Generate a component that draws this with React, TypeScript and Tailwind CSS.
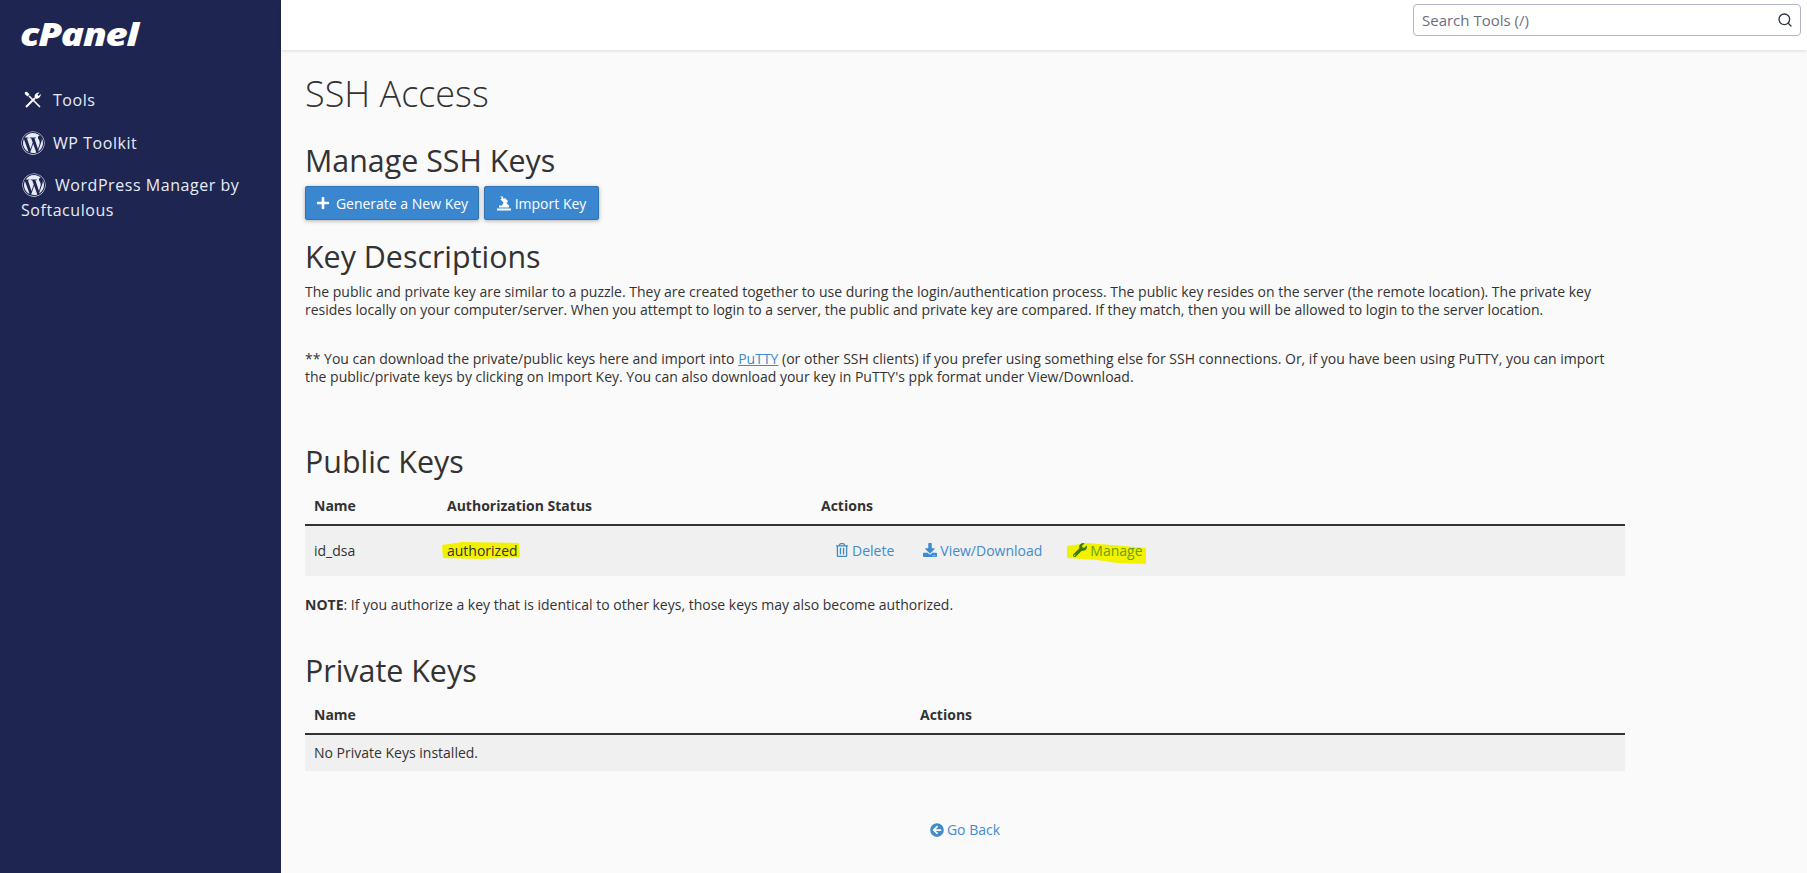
import { FaPlus, FaDownload, FaWrench, FaArrowCircleLeft, FaWordpress, FaRegTrashAlt } from "react-icons/fa";
import { Search } from "lucide-react";

const font = "font-['Open_Sans',sans-serif]";

function ToolsIcon() {
  return (
    <svg width="18" height="18" viewBox="0 0 18 18" fill="none" stroke="#fff" strokeWidth="1.6" className="shrink-0">
      <path d="M5 5 L16 16" />
      <path d="M1 1 L3 0.8 L5.5 3.5 L3.5 5.5 L0.8 3 Z" fill="#fff" stroke="none" />
      <path d="M2 16 L11 7" strokeWidth="2" />
      <path d="M10.5 5.5 C10.5 3 13 1 15.5 1.5 L13.5 3.8 L14.5 5 L16.8 3 C17 6 14 8.5 11.5 7.5 Z" fill="#fff" stroke="none" />
    </svg>
  );
}

function ImportIcon() {
  return (
    <svg width="14" height="15" viewBox="0 0 14 15" fill="#fff" className="shrink-0">
      <rect x="0" y="12.5" width="14" height="2" />
      <path d="M2 11.5 L2 9.5 L5 9.5 L6.5 6.5 L3.5 3.5 L5 2 L3 0.5 L6 0.5 L6.5 3 L8 2 L11 5 L9.5 7 L12 9.5 L12 11.5 Z" />
    </svg>
  );
}

export default function App() {
  return (
    <div className={`${font} flex min-h-[873px] h-[873px] overflow-hidden bg-[#fafafa] text-[14px] text-[#333]`}>
      <aside className="w-[281px] shrink-0 bg-[#1f2551] text-[#e6ecf5]">
        <div className="pl-[20px] pt-[15px] h-[63px]">
          <span className="inline-block origin-left scale-x-[1.24] text-[31px] leading-[38px] font-extrabold italic tracking-[-1px] text-white">cPanel</span>
        </div>
        <nav className="pt-[25px] text-[16px] leading-[25px] tracking-[0.55px]">
          <div className="flex items-center pl-[24px] h-[24px] gap-[11px]">
            <ToolsIcon />
            <span>Tools</span>
          </div>
          <div className="flex items-center pl-[21px] h-[24px] mt-[19px] gap-[8px]">
            <FaWordpress className="text-[24px]" />
            <span>WP Toolkit</span>
          </div>
          <div className="pl-[21px] mt-[18px]">
            <FaWordpress className="inline text-[24px] align-[-6px] mx-[1px]" />
            <span className="ml-[8px]">WordPress Manager by</span>
            <br />
            <span>Softaculous</span>
          </div>
        </nav>
      </aside>
      <div className="flex-1 min-w-0">
        <header className="h-[50px] bg-white shadow-[0_1px_3px_rgba(0,0,0,0.12)] flex items-center justify-end pr-[6px]">
          <div className="w-[388px] h-[32px] mb-[10px] border border-[#b4b6c8] rounded-[4px] flex items-center justify-between pl-[8px] pr-[7px] text-[#6b6f7b] bg-white">
            <span className="text-[15px]">Search Tools (/)</span>
            <Search size={16} strokeWidth={2} className="text-[#2a3540]" />
          </div>
        </header>
        <main className="pl-[24px] w-[1344px] pt-[24px]">
          <h1 className="text-[36px] leading-[40px] font-light text-[#333]">SSH Access</h1>
          <h2 className="text-[30.4px] leading-[33px] mt-[30px] text-[#333]">Manage SSH Keys</h2>
          <div className="flex gap-[5px] mt-[9px]">
            <button className="h-[34px] w-[174px] flex items-center justify-center gap-[6px] bg-[#3a87cf] border border-[#2f74b5] rounded-[2px] text-white shadow-[0_1px_4px_rgba(0,0,0,0.3)]">
              <FaPlus className="text-[14px]" /> Generate a New Key
            </button>
            <button className="h-[34px] w-[115px] flex items-center justify-center gap-[4px] bg-[#3a87cf] border border-[#2f74b5] rounded-[2px] text-white shadow-[0_1px_4px_rgba(0,0,0,0.3)]">
              <ImportIcon /> Import Key
            </button>
          </div>
          <h2 className="text-[30.4px] leading-[33px] mt-[20px]">Key Descriptions</h2>
          <p className="mt-[10px] leading-[18px]">
            The public and private key are similar to a puzzle. They are created together to use during the login/authentication process. The public key resides on the server (the remote location). The private key resides locally on your computer/server. When you attempt to login to a server, the public and private key are compared. If they match, then you will be allowed to login to the server location.
          </p>
          <p className="mt-[31px] leading-[18px]">
            ** You can download the private/public keys here and import into <a className="text-[#428bca] underline">PuTTY</a> (or other SSH clients) if you prefer using something else for SSH connections. Or, if you have been using PuTTY, you can import the public/private keys by clicking on Import Key. You can also download your key in PuTTY's ppk format under View/Download.
          </p>
          <h2 className="text-[30.4px] leading-[33px] mt-[59px]">Public Keys</h2>
          <div className="mt-[9px] grid grid-cols-[133px_374px_1fr] font-bold h-[39px] items-center border-b-2 border-[#333] pl-[9px]">
            <span>Name</span>
            <span>Authorization Status</span>
            <span>Actions</span>
          </div>
          <div className="grid grid-cols-[133px_374px_1fr] h-[50px] items-center bg-[#f0f0f0] pl-[9px] pb-[2px]">
            <span>id_dsa</span>
            <span className="relative block">
              <svg className="absolute -left-[5px] top-[2px]" width="78" height="17" viewBox="0 0 78 17">
                <path d="M0 3 L20 0 L77 1 L78 15 L40 17 L1 16 Z" fill="#f2f200" />
              </svg>
              <span className="relative">authorized</span>
            </span>
            <span className="flex items-center text-[#428bca]">
              <span className="flex items-center gap-[3px] ml-[14px]"><FaRegTrashAlt className="text-[14px]" /> Delete</span>
              <span className="flex items-center gap-[3px] ml-[29px]"><FaDownload className="text-[14px]" /> View/Download</span>
              <span className="relative flex items-center gap-[3px] ml-[31px] text-[#6a9f10]">
                <svg className="absolute -left-[6px] top-[3px]" width="80" height="22" viewBox="0 0 80 22">
                  <path d="M0 3 L20 0 L45 2 L79 5 L79 21 L50 20 L30 17 L0 15 Z" fill="#f2f200" />
                </svg>
                <FaWrench className="relative text-[14px] text-[#3c7a10]" /> <span className="relative">Manage</span>
              </span>
            </span>
          </div>
          <p className="mt-[19px] leading-[20px]"><b>NOTE</b>: If you authorize a key that is identical to other keys, those keys may also become authorized.</p>
          <h2 className="text-[30.4px] leading-[33px] mt-[39px]">Private Keys</h2>
          <div className="mt-[9px] grid grid-cols-[606px_1fr] font-bold h-[39px] items-center border-b-2 border-[#333] pl-[9px] pb-[1px]">
            <span>Name</span>
            <span>Actions</span>
          </div>
          <div className="h-[36px] flex items-center bg-[#f0f0f0] pl-[9px] pb-[2px]">No Private Keys installed.</div>
          <div className="mt-[48px] flex items-center justify-center gap-[3px] text-[#428bca]">
            <FaArrowCircleLeft className="text-[14px]" /> Go Back
          </div>
        </main>
      </div>
    </div>
  );
}
